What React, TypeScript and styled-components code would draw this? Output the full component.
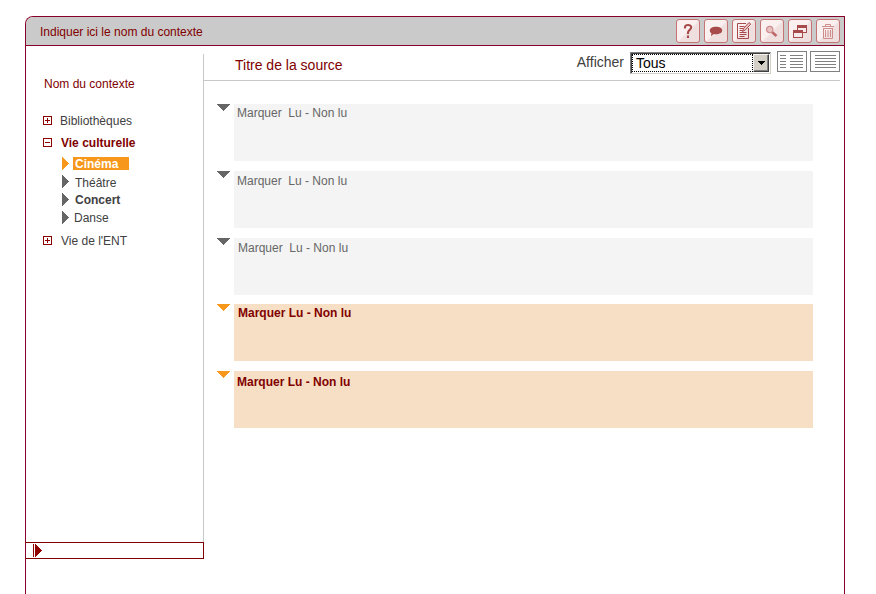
import React from "react";
import styled, { createGlobalStyle } from "styled-components";

const WINE = "#86002a";
const MAROON = "#800000";
const ORANGE = "#f7981d";
const GREY = "#666666";

const GlobalStyle = createGlobalStyle`
  * { box-sizing: border-box; }
  body { margin: 0; background: #fff; font: 12px/14px "Liberation Sans", Arial, sans-serif; overflow: hidden; }
  svg { display: block; flex: none; }
`;

const Frame = styled.div`
  width: 820px;
  height: 578px;
  margin: 16px 0 0 25px;
  display: flex;
  flex-direction: column;
  border: 1px solid ${WINE};
  border-bottom: 0;
  border-top-left-radius: 8px;
  overflow: hidden;
`;

const TitleBar = styled.header`
  height: 29px;
  flex: none;
  display: flex;
  align-items: center;
  justify-content: space-between;
  padding: 0 4px 0 14px;
  background: #cacaca;
  border-bottom: 1px solid ${WINE};
  color: ${MAROON};
`;

const TitleText = styled.span`
  padding-top: 2px;
`;

const Tools = styled.div`
  display: flex;
  gap: 4px;
`;

const ToolButton = styled.button`
  width: 24px;
  height: 24px;
  padding: 0;
  border: 1px solid #c47474;
  border-radius: 3px;
  background: linear-gradient(135deg, #faf0f0 0 48%, #f0dfdf 56% 100%);
`;

const Body = styled.div`
  flex: 1;
  display: flex;
`;

const Sidebar = styled.aside`
  width: 178px;
  display: flex;
  flex-direction: column;
`;

const TreePanel = styled.nav`
  height: 488px;
  margin-top: 8px;
  border-right: 1px solid #c8c8c8;
  padding: 23px 0 0 17px;
`;

const ContextName = styled.div`
  color: ${MAROON};
  padding-left: 1px;
  margin-bottom: 23px;
`;

const Branch = styled.div<{ $open?: boolean; $top?: number; $indent?: number }>`
  display: flex;
  align-items: flex-start;
  height: 14px;
  margin-top: ${(p) => p.$top ?? 0}px;
  gap: ${(p) => p.$indent ?? 9}px;
  color: ${(p) => (p.$open ? MAROON : "#404040")};
  font-weight: ${(p) => (p.$open ? "bold" : "normal")};

  svg {
    margin-top: 2px;
  }
`;

const Leaves = styled.div`
  padding: 7px 0 0 19px;
`;

const Leaf = styled.div<{ $height: number; $bold?: boolean; $gap?: number }>`
  display: flex;
  align-items: flex-start;
  height: ${(p) => p.$height}px;
  gap: ${(p) => p.$gap ?? 6}px;
  color: #404040;
  font-weight: ${(p) => (p.$bold ? "bold" : "normal")};
`;

const LeafText = styled.span<{ $active?: boolean; $drop?: number }>`
  margin-top: ${(p) => p.$drop ?? 0}px;
  ${(p) =>
    p.$active &&
    `width: 56px; height: 13px; padding-left: 2px; background: ${ORANGE}; color: #fff;`}
`;

const Collapser = styled.div`
  height: 17px;
  display: flex;
  align-items: center;
  padding-left: 7px;
  border: 1px solid ${MAROON};
  border-left: 0;
`;

const Main = styled.main`
  flex: 1;
  padding-right: 4px;
`;

const SourceBar = styled.div`
  height: 35px;
  display: flex;
  align-items: flex-start;
  border-bottom: 1px solid #c8c8c8;
  font-size: 14px;
  line-height: 16px;
`;

const SourceTitle = styled.h1`
  flex: 1;
  margin: 0;
  padding: 11px 0 0 31px;
  font: inherit;
  color: ${MAROON};
`;

const FilterLabel = styled.span`
  padding: 8px 6px 0 0;
  color: #404040;
`;

const Select = styled.div`
  width: 141px;
  height: 22px;
  margin: 6px 6px 0 0;
  display: flex;
  border: 1px solid;
  border-color: #808080 #d4d0c8 #d4d0c8 #808080;
  box-shadow: inset 1px 1px #404040;
  padding: 1px;
`;

const SelectValue = styled.span`
  flex: 1;
  border: 1px dotted #000;
  padding-left: 3px;
  line-height: 16px;
  color: #000;
`;

const SelectArrow = styled.span`
  width: 16px;
  display: grid;
  place-items: center;
  background: #d4d0c8;
  border: 1px solid;
  border-color: #f4f2ee #404040 #404040 #f4f2ee;
  box-shadow: inset -1px -1px #808080;
`;

const Views = styled.div`
  display: flex;
  gap: 3px;
  margin-top: 5px;
`;

const Entries = styled.div`
  padding: 23px 27px 0 13px;
`;

const Entry = styled.article<{ $gap: number }>`
  display: flex;
  gap: 4px;
  margin-bottom: ${(p) => p.$gap}px;
`;

const EntryBox = styled.div<{ $unread?: boolean; $left: number; $top: number }>`
  flex: 1;
  height: 57px;
  padding: ${(p) => p.$top}px 0 0 ${(p) => p.$left}px;
  white-space: pre;
  background: ${(p) => (p.$unread ? "#f6dfc5" : "#f4f4f4")};
  color: ${(p) => (p.$unread ? MAROON : GREY)};
  font-weight: ${(p) => (p.$unread ? "bold" : "normal")};
`;

const Toggle = ({ open }: { open?: boolean }) => (
  <svg width="9" height="9" shapeRendering="crispEdges">
    <path d="M.5.5h8v8h-8zM2 4.5h5" fill="none" stroke="#8c0000" />
    {!open && <path d="M4.5 2v5" stroke="#8c0000" />}
  </svg>
);

const RightArrow = ({ color }: { color: string }) => (
  <svg width="7" height="13" shapeRendering="crispEdges">
    <path d="M0 0L7 6.5L0 13z" fill={color} />
  </svg>
);

const DownArrow = ({ color }: { color: string }) => (
  <svg width="13" height="7" shapeRendering="crispEdges">
    <path d="M0 0H13L6.5 7z" fill={color} />
  </svg>
);

const RED = "#a94a4a";
const PALE = "#cf8c8c";

const toolIcons: { name: string; art: React.ReactNode }[] = [
  {
    name: "Aide",
    art: <path d="M8 8.500V7.200C8 5.600 9.200 5 11 5S14.200 5.800 14.200 7.500C14.200 9.800 11 10 11 12.500V14M11 15.500V18" fill="none" stroke={RED} strokeWidth="2.100" />,
  },
  {
    name: "Commentaire",
    art: <path d="M11 6.800c3.800 0 6.200 1.500 6.200 3.700s-2.600 3.700-6.200 3.700c-.8 0-1.600 0-2.300-.2L6 16.200l.4-2.900C5.300 12.600 4.800 11.700 4.800 10.500c0-2.200 2.400-3.700 6.200-3.700z" fill={RED} />,
  },
  {
    name: "Rédiger",
    art: (
      <g fill="none" stroke={RED}>
        <path d="M13 3.500H4.500v15h11V8M6.500 6.500h5M6.500 8.500h4M6.500 10.500h3M6.500 12.500h7M6.500 14.500h7M6.500 16.500h5" />
        <path d="M9.500 11.500l1-3 5.500-6 1.800 1.500-5.500 6z" fill="#e9c5c5" />
      </g>
    ),
  },
  {
    name: "Rechercher",
    art: (
      <g stroke={PALE}>
        <path d="M11 12l4.500 4" stroke="#bb6767" strokeWidth="2.400" />
        <circle cx="8.700" cy="9.500" r="3.200" fill="#e8c2c2" strokeWidth="1.200" />
      </g>
    ),
  },
  {
    name: "Fenêtres",
    art: (
      <g fill="#f8eaea" stroke={RED} shapeRendering="crispEdges">
        <path d="M8.500 5.500h9v7h-9z" />
        <path d="M8 6.500h10" strokeWidth="3" />
        <path d="M4.500 10.500h9v7h-9z" />
        <path d="M4 11.500h10" strokeWidth="3" />
      </g>
    ),
  },
  {
    name: "Supprimer",
    art: (
      <g fill="none" stroke={PALE}>
        <path d="M5 6.500h12M8.500 6V4.500h5V6M6.500 8v10.500h9V8M6 8.500h10M8.500 10v7M11 10v7M13.500 10v7" />
      </g>
    ),
  },
];

const ViewIcon = ({ split }: { split?: boolean }) => (
  <svg width="30" height="21" fill="none" stroke="#808080" shapeRendering="crispEdges">
    <path d="M.5.5h29v20H.5z" />
    {[4.5, 7.5, 10.5, 13.5, 16.5].map((y) => (
      <path key={y} d={split ? `M3 ${y}h6M13 ${y}h13` : `M5 ${y}h21`} />
    ))}
  </svg>
);

const leaves = [
  { text: "Cinéma", height: 18, gap: 4, bold: true, active: true },
  { text: "Théâtre", height: 18, drop: 1 },
  { text: "Concert", height: 18, bold: true },
  { text: "Danse", height: 16, gap: 5 },
];

const entries = [
  { left: 3, top: 2, gap: 10 },
  { left: 3, top: 3, gap: 10 },
  { left: 4, top: 3, gap: 9 },
  { left: 4, top: 2, gap: 10, unread: true },
  { left: 3, top: 4, gap: 0, unread: true },
];

export default function App() {
  return (
    <>
      <GlobalStyle />
      <Frame>
        <TitleBar>
          <TitleText>Indiquer ici le nom du contexte</TitleText>
          <Tools>
            {toolIcons.map((t) => (
              <ToolButton key={t.name} aria-label={t.name}>
                <svg width="22" height="22">{t.art}</svg>
              </ToolButton>
            ))}
          </Tools>
        </TitleBar>
        <Body>
          <Sidebar>
            <TreePanel>
              <ContextName>Nom du contexte</ContextName>
              <Branch $indent={8}><Toggle />Bibliothèques</Branch>
              <Branch $open $top={8}><Toggle open />Vie culturelle</Branch>
              <Leaves>
                {leaves.map((l) => (
                  <Leaf key={l.text} $height={l.height} $bold={l.bold} $gap={l.gap}>
                    <RightArrow color={l.active ? ORANGE : GREY} />
                    <LeafText $active={l.active} $drop={l.drop}>{l.text}</LeafText>
                  </Leaf>
                ))}
              </Leaves>
              <Branch $top={7}><Toggle />Vie de l'ENT</Branch>
            </TreePanel>
            <Collapser>
              <svg width="9" height="13" shapeRendering="crispEdges">
                <path d="M0 0h1v13H0zM2 0h1l6 6.500L3 13H2z" fill="#900000" />
              </svg>
            </Collapser>
          </Sidebar>
          <Main>
            <SourceBar>
              <SourceTitle>Titre de la source</SourceTitle>
              <FilterLabel>Afficher</FilterLabel>
              <Select>
                <SelectValue>Tous</SelectValue>
                <SelectArrow>
                  <svg width="7" height="4" shapeRendering="crispEdges"><path d="M0 0h7L3.500 4z" /></svg>
                </SelectArrow>
              </Select>
              <Views><ViewIcon split /><ViewIcon /></Views>
            </SourceBar>
            <Entries>
              {entries.map((e, i) => (
                <Entry key={i} $gap={e.gap}>
                  <DownArrow color={e.unread ? ORANGE : GREY} />
                  <EntryBox $unread={e.unread} $left={e.left} $top={e.top}>
                    {e.unread ? "Marquer Lu - Non lu" : "Marquer  Lu - Non lu"}
                  </EntryBox>
                </Entry>
              ))}
            </Entries>
          </Main>
        </Body>
      </Frame>
    </>
  );
}
